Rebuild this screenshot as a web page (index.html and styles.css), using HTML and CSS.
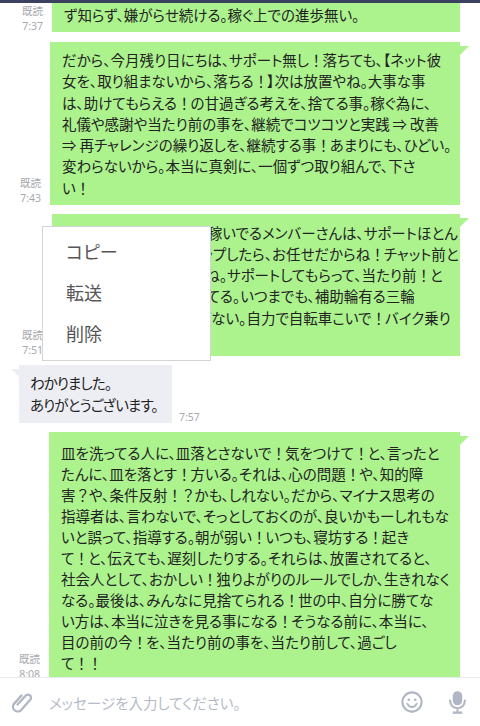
FILE: index.html
```html
<!DOCTYPE html>
<html lang="ja">
<head>
<meta charset="utf-8">
<title>トーク</title>
<link rel="stylesheet" href="styles.css">
</head>
<body>
<div class="app">
  <div class="status"></div>
  <main class="chat">
    <div class="row row-out">
      <div class="meta"><span>既読</span><span>7:37</span></div>
      <div class="bubble out w1">ず知らず、嫌がらせ続ける。稼ぐ上での進歩無い。</div>
    </div>
    <div class="row row-out">
      <div class="meta"><span>既読</span><span>7:43</span></div>
      <div class="bubble out tail w2">だから、今月残り日にちは、サポート無し<span class="f">！</span>落ちても、【ネット彼<br>女を、取り組まないから、落ちる<span class="f">！</span>】次は放置やね。大事な事<br>は、助けてもらえる<span class="f">！</span>の甘過ぎる考えを、捨てる事。稼ぐ為に、<br>礼儀や感謝や当たり前の事を、継続でコツコツと実践&thinsp;⇒&thinsp;改善<br>⇒&thinsp;再チャレンジの繰り返しを、継続する事<span class="f">！</span>あまりにも、ひどい。<br>変わらないから。本当に真剣に、一個ずつ取り組んで、下さ<br>い<span class="f">！</span></div>
    </div>
    <div class="row row-out">
      <div class="meta"><span>既読</span><span>7:51</span></div>
      <div class="bubble out tail w1">いけない勘違いしてる。稼いでるメンバーさんは、サポートほとん<br>ど無しでやってる。ステップしたら、お任せだからね<span class="f">！</span>チャット前と<br>は違う。自立してるからね。サポートしてもらって、当たり前<span class="f">！</span>と<br>思う人は、差が開いてってる。いつまでも、補助輪有る三輪<br>車では、伸びないし稼げない。自力で自転車こいで<span class="f">！</span>バイク乗り<br>なさい<span class="f">！</span></div>
    </div>
    <div class="row row-in">
      <div class="bubble in">わかりました。<br>ありがとうございます。</div>
      <div class="meta meta-in"><span>7:57</span></div>
    </div>
    <div class="row row-out">
      <div class="meta meta-last"><span>既読</span><span>8:08</span></div>
      <div class="bubble out tail w3">皿を洗ってる人に、皿落とさないで<span class="f">！</span>気をつけて<span class="f">！</span>と、言ったと<br>たんに、皿を落とす<span class="f">！</span>方いる。それは、心の問題<span class="f">！</span>や、知的障<br>害<span class="f">？</span>や、条件反射<span class="f">！？</span>かも、しれない。だから、マイナス思考の<br>指導者は、言わないで、そっとしておくのが、良いかもーしれもな<br>いと誤って、指導する。朝が弱い<span class="f">！</span>いつも、寝坊する<span class="f">！</span>起き<br>て<span class="f">！</span>と、伝えても、遅刻したりする。それらは、放置されてると、<br>社会人として、おかしい<span class="f">！</span>独りよがりのルールでしか、生きれなく<br>なる。最後は、みんなに見捨てられる<span class="f">！</span>世の中、自分に勝てな<br>い方は、本当に泣きを見る事になる<span class="f">！</span>そうなる前に、本当に、<br>目の前の今<span class="f">！</span>を、当たり前の事を、当たり前して、過ごし<br>て<span class="f">！！</span></div>
    </div>
  </main>
  <footer class="inputbar">
    <svg class="icon clip" viewBox="0 0 24 24" aria-hidden="true"><path transform="rotate(42 12 12)" d="M7.500 7v10.500a4.500 4.500 0 0 0 9 0V4.500a3 3 0 0 0-6 0V16"/></svg>
    <span class="placeholder">メッセージを入力してください。</span>
    <svg class="icon smile" viewBox="0 0 24 24" aria-hidden="true"><circle cx="12" cy="12" r="10.500"/><path d="M7 14c1.200 2.400 3 3.400 5 3.400s3.800-1 5-3.400"/><circle class="dot" cx="8.500" cy="9.500" r="1.400"/><circle class="dot" cx="15.500" cy="9.500" r="1.400"/></svg>
    <svg class="icon mic" viewBox="0 0 18 24" aria-hidden="true"><rect class="dot" x="4" y="0" width="10" height="15" rx="5"/><path d="M1.200 10c0 4.800 3.200 8 7.800 8s7.800-3.200 7.800-8M9 18v3.500"/><rect class="dot" x="4" y="21.500" width="10" height="2.500"/></svg>
  </footer>
  <div class="menu">
    <div class="menu-item">コピー</div>
    <div class="menu-item">転送</div>
    <div class="menu-item">削除</div>
  </div>
</div>
</body>
</html>
```
FILE: styles.css
```css
* { box-sizing: border-box; }
html, body { margin: 0; height: 100%; }
body { background: #fff; font-family: "Noto Sans CJK JP", "Noto Sans", sans-serif; color: #222; }
.app { position: relative; width: 480px; height: 726px; display: flex; flex-direction: column; overflow: hidden; }
.status { height: 3px; background: #3c4160; flex: none; position: relative; z-index: 1; }
.chat { flex: 1; min-height: 0; display: flex; flex-direction: column; justify-content: flex-end; gap: 9.3px; overflow: hidden; }
.row { display: flex; align-items: flex-end; flex: none; }
.row-out { justify-content: flex-end; padding-right: 20px; }
.row-in { padding-left: 19px; }
.bubble { font-size: 14.5px; line-height: 21.3px; font-feature-settings: "palt"; white-space: nowrap; position: relative; }
.f { font-feature-settings: normal; letter-spacing: -1px; }
.out { background: #acf38e; padding: 7.500px 10px 6.700px 12px; }
.w1 { width: 408px; }
.w2 { width: 410px; }
.w3 { width: 411px; line-height: 21px; padding-top: 9.500px; padding-bottom: 4.200px; }
.tail::after { content: ""; position: absolute; top: 4px; right: -9px; border-top: 9px solid #acf38e; border-right: 9px solid transparent; }
.in { background: #eceef3; line-height: 22px; letter-spacing: -0.9px; padding: 7px 11px 6.700px 11px; width: 153px; }
.in::before { content: ""; position: absolute; top: 4px; left: -8px; border-top: 9px solid #eceef3; border-left: 9px solid transparent; }
.meta { display: flex; flex-direction: column; align-items: flex-end; font-family: "Noto Sans", "Noto Sans CJK JP", sans-serif; font-size: 10.500px; line-height: 15px; color: #a7a9ae; margin: 0 9px -1.500px 0; }
.meta-in { margin: 0 0 -1.500px 7px; }
.meta-last { margin-bottom: -5px; }
.inputbar { height: 49px; flex: none; background: #fff; border-top: 1px solid #e8e9ec; display: flex; align-items: center; padding: 0 14px 0 9px; position: relative; }
.icon { flex: none; fill: none; stroke: #b0b6c4; stroke-width: 2.200; stroke-linecap: round; }
.dot { fill: #b0b6c4; stroke: none; }
.clip { width: 25px; height: 25px; }
.placeholder { flex: 1; margin-left: 15px; font-size: 14.500px; color: #b5bac7; font-feature-settings: "palt"; }
.smile { width: 22px; height: 22px; margin-right: 26px; }
.mic { width: 17px; height: 23px; }
.menu { position: absolute; left: 42px; top: 225.500px; width: 169px; height: 135px; background: #fff; border: 1px solid #d4d4d6; padding: 4px 0 0 23px; }
.menu-item { height: 41px; display: flex; align-items: center; font-size: 18px; color: #555; font-feature-settings: "palt"; }
```
